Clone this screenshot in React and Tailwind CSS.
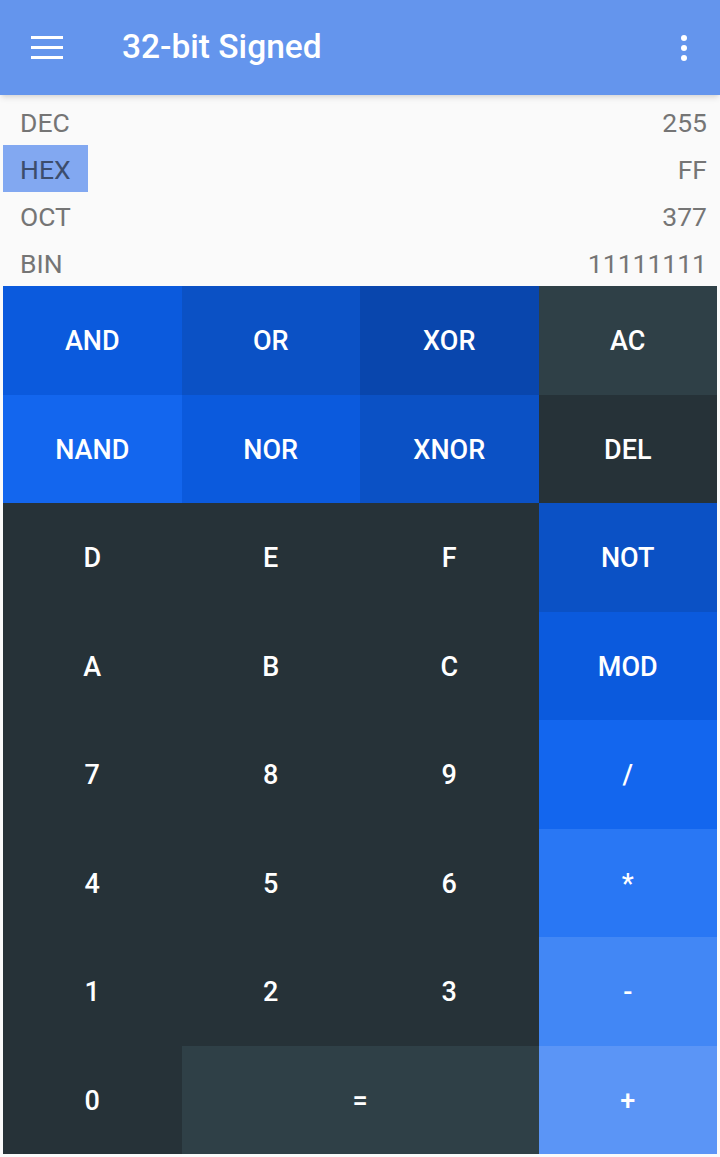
import { useState } from "react";

const KEYS = [
  { label: "AND", bg: "bg-[#0b5add]" },
  { label: "OR", bg: "bg-[#0b51c5]" },
  { label: "XOR", bg: "bg-[#0946ad]" },
  { label: "AC", bg: "bg-[#2f4047]" },
  { label: "NAND", bg: "bg-[#1366ee]" },
  { label: "NOR", bg: "bg-[#0b5add]" },
  { label: "XNOR", bg: "bg-[#0b51c5]" },
  { label: "DEL", bg: "bg-[#263238]" },
  { label: "D", bg: "bg-[#263238]" },
  { label: "E", bg: "bg-[#263238]" },
  { label: "F", bg: "bg-[#263238]" },
  { label: "NOT", bg: "bg-[#0b51c5]" },
  { label: "A", bg: "bg-[#263238]" },
  { label: "B", bg: "bg-[#263238]" },
  { label: "C", bg: "bg-[#263238]" },
  { label: "MOD", bg: "bg-[#0b5add]" },
  { label: "7", bg: "bg-[#263238]" },
  { label: "8", bg: "bg-[#263238]" },
  { label: "9", bg: "bg-[#263238]" },
  { label: "/", bg: "bg-[#1366ee]" },
  { label: "4", bg: "bg-[#263238]" },
  { label: "5", bg: "bg-[#263238]" },
  { label: "6", bg: "bg-[#263238]" },
  { label: "*", bg: "bg-[#2977f4]" },
  { label: "1", bg: "bg-[#263238]" },
  { label: "2", bg: "bg-[#263238]" },
  { label: "3", bg: "bg-[#263238]" },
  { label: "-", bg: "bg-[#4287f5]" },
  { label: "0", bg: "bg-[#263238]" },
  { label: "=", bg: "bg-[#2f4047]", wide: true },
  { label: "+", bg: "bg-[#5b95f6]" },
];

const BASES = [
  { id: "DEC", value: "255" },
  { id: "HEX", value: "FF" },
  { id: "OCT", value: "377" },
  { id: "BIN", value: "11111111" },
];

export default function App() {
  const [base, setBase] = useState("HEX");

  return (
    <div className="w-[720px] h-[1157px] bg-[#fafafa] flex flex-col font-['Roboto',sans-serif] overflow-hidden">
      {/* App bar */}
      <header className="relative z-10 h-[95px] shrink-0 bg-[#6495ed] shadow-md flex items-center text-white">
        <button className="w-[94px] h-full flex items-center justify-center">
          <div className="flex flex-col gap-[7px] w-[32px]">
            <span className="block h-[3px] bg-white" />
            <span className="block h-[3px] bg-white" />
            <span className="block h-[3px] bg-white" />
          </div>
        </button>
        <h1 className="ml-[28px] text-[33.5px] font-medium">32-bit Signed</h1>
        <button className="ml-auto mr-[26px] w-[20px] h-full flex flex-col items-center justify-center gap-[4px]">
          <span className="block w-[6px] h-[6px] rounded-full bg-white" />
          <span className="block w-[6px] h-[6px] rounded-full bg-white" />
          <span className="block w-[6px] h-[6px] rounded-full bg-white" />
        </button>
      </header>

      <div className="flex-1 flex flex-col p-[3px]">
        {/* Display */}
        <div className="flex flex-col">
          {BASES.map((b) => (
            <div key={b.id} className="h-[47px] flex items-center" onClick={() => setBase(b.id)}>
              <span
                className={`h-full w-[85px] flex items-center pl-[17px] pt-[3px] text-[26.5px] ${
                  base === b.id ? "bg-[#82a8f1] text-[#3c4d6c]" : "text-[#757575]"
                }`}
              >
                {b.id}
              </span>
              <span className="ml-auto pr-[10px] pt-[3px] text-[26.5px] text-[#757575]">{b.value}</span>
            </div>
          ))}
        </div>

        {/* Keypad */}
        <div className="grid grid-cols-4 grid-rows-8 h-[868px]">
          {KEYS.map((k) => (
            <button
              key={k.label}
              className={`${k.bg} ${k.wide ? "col-span-2" : ""} flex items-center justify-center pt-[2px] text-white text-[27px] font-medium`}
            >
              {k.label}
            </button>
          ))}
        </div>
      </div>
    </div>
  );
}
